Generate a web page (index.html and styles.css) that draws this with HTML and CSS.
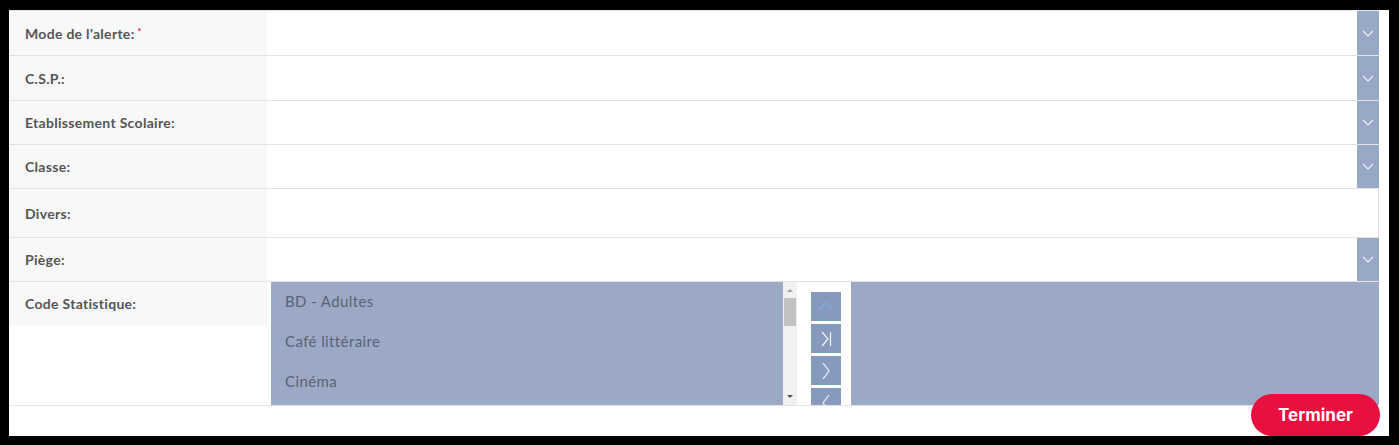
FILE: index.html
```html
<!DOCTYPE html>
<html lang="fr">
<head>
<meta charset="UTF-8">
<meta name="viewport" content="width=device-width, initial-scale=1.0">
<title>Alerte</title>
<link rel="stylesheet" href="styles.css">
</head>
<body>
<div class="frame">
    <div class="form">
        <div class="row">
            <div class="label">Mode de l'alerte: <span class="req">*</span></div>
            <div class="field select"><span class="arrow"><svg width="12" height="7" viewBox="0 0 12 7"><path d="M1 1l5 5 5-5" fill="none" stroke="#eef1f8" stroke-width="1.1"/></svg></span></div>
        </div>
        <div class="row">
            <div class="label">C.S.P.:</div>
            <div class="field select"><span class="arrow"><svg width="12" height="7" viewBox="0 0 12 7"><path d="M1 1l5 5 5-5" fill="none" stroke="#eef1f8" stroke-width="1.1"/></svg></span></div>
        </div>
        <div class="row r43">
            <div class="label">Etablissement Scolaire:</div>
            <div class="field select"><span class="arrow"><svg width="12" height="7" viewBox="0 0 12 7"><path d="M1 1l5 5 5-5" fill="none" stroke="#eef1f8" stroke-width="1.1"/></svg></span></div>
        </div>
        <div class="row r43">
            <div class="label">Classe:</div>
            <div class="field select"><span class="arrow"><svg width="12" height="7" viewBox="0 0 12 7"><path d="M1 1l5 5 5-5" fill="none" stroke="#eef1f8" stroke-width="1.1"/></svg></span></div>
        </div>
        <div class="row r48">
            <div class="label">Divers:</div>
            <div class="field text"></div>
        </div>
        <div class="row r43">
            <div class="label">Piège:</div>
            <div class="field select"><span class="arrow"><svg width="12" height="7" viewBox="0 0 12 7"><path d="M1 1l5 5 5-5" fill="none" stroke="#eef1f8" stroke-width="1.1"/></svg></span></div>
        </div>
        <div class="row rlist">
            <div class="label short">Code Statistique:</div>
            <div class="dual">
                <div class="listbox">
                    <ul class="items">
                        <li>BD - Adultes</li>
                        <li>Café littéraire</li>
                        <li>Cinéma</li>
                    </ul>
                    <div class="scrollbar">
                        <span class="sb-up"></span>
                        <span class="sb-thumb"></span>
                        <span class="sb-down"></span>
                    </div>
                </div>
                <div class="movers">
                    <span class="mv"><svg width="16" height="9" viewBox="0 0 16 9"><path d="M1 8l7-7 7 7" fill="none" stroke="#7fb0e0" stroke-width="1.2"/></svg></span>
                    <span class="mv"><svg width="12" height="16" viewBox="0 0 12 16"><path d="M2 1l6 7-6 7M10.5 1v14" fill="none" stroke="#f2f4fa" stroke-width="1.2"/></svg></span>
                    <span class="mv"><svg width="10" height="18" viewBox="0 0 10 18"><path d="M2 1l6 8-6 8" fill="none" stroke="#f2f4fa" stroke-width="1.2"/></svg></span>
                    <span class="mv"><svg width="10" height="18" viewBox="0 0 10 18"><path d="M8 1l-6 8 6 8" fill="none" stroke="#f2f4fa" stroke-width="1.2"/></svg></span>
                </div>
                <div class="listbox right"></div>
            </div>
        </div>
    </div>
    <button class="finish" type="button">Terminer</button>
</div>
</body>
</html>
```

FILE: styles.css
```css
body {
    margin: 0;
    background: #000;
    padding: 10px 10px 9px 9px;
    font-family: Lato, "Open Sans", sans-serif;
}
.frame {
    position: relative;
    height: 426px;
    background: #fff;
    overflow: hidden;
}
.form {
    margin-right: 10px;
    border-top: 1px solid #e6e6e6;
}
.row {
    display: flex;
    height: 44px;
    border-bottom: 1px solid #e3e3e3;
}
.row.r43 {
    height: 43px;
}
.row.r48 {
    height: 48px;
}
.row.rlist {
    height: 123px;
}
.label {
    width: 242px;
    flex-shrink: 0;
    padding-left: 16px;
    background: #f8f8f8;
    color: #555;
    font-size: 14px;
    font-weight: bold;
    letter-spacing: 0.3px;
    display: flex;
    align-items: center;
    gap: 3px;
}
.label.short {
    height: 43px;
}
.req {
    color: #e8103e;
    font-size: 9px;
    align-self: flex-start;
    margin-top: 15px;
}
.field {
    flex: 1;
    display: flex;
    justify-content: flex-end;
}
.field.text {
    border-right: 1px solid #e0e0e0;
}
.arrow {
    width: 22px;
    background: #9aa8c7;
    display: flex;
    align-items: center;
    justify-content: center;
}
.dual {
    flex: 1;
    display: flex;
    padding-left: 4px;
    overflow: hidden;
}
.listbox {
    width: 526px;
    background: #9ba9c7;
    display: flex;
}
.listbox.right {
    flex: 1;
}
.items {
    flex: 1;
    list-style: none;
    margin: 0;
    padding: 10px 0 0 14px;
    color: #5d6272;
    font-size: 15px;
    letter-spacing: 0.4px;
}
.items li {
    height: 40px;
}
.scrollbar {
    width: 14px;
    background: #f1f1f1;
    position: relative;
}
.sb-up, .sb-down {
    position: absolute;
    left: 4px;
    width: 0;
    height: 0;
    border-left: 3px solid transparent;
    border-right: 3px solid transparent;
}
.sb-up {
    top: 7px;
    border-bottom: 3px solid #a3a3a3;
}
.sb-down {
    bottom: 7px;
    border-top: 3px solid #505050;
}
.sb-thumb {
    position: absolute;
    top: 16px;
    left: 1px;
    width: 12px;
    height: 28px;
    background: #c1c1c1;
}
.movers {
    width: 30px;
    padding: 10px 10px 0 14px;
    display: flex;
    flex-direction: column;
    gap: 3px;
    background: #fff;
    overflow: hidden;
}
.mv {
    height: 29px;
    flex-shrink: 0;
    background: #8899be;
    display: flex;
    align-items: center;
    justify-content: center;
}
.finish {
    position: absolute;
    right: 9px;
    bottom: 0;
    width: 129px;
    height: 42px;
    border: none;
    border-radius: 21px;
    background: #e8103e;
    color: #fff;
    font-family: Inter, sans-serif;
    font-size: 17px;
    font-weight: bold;
    cursor: pointer;
}
```
